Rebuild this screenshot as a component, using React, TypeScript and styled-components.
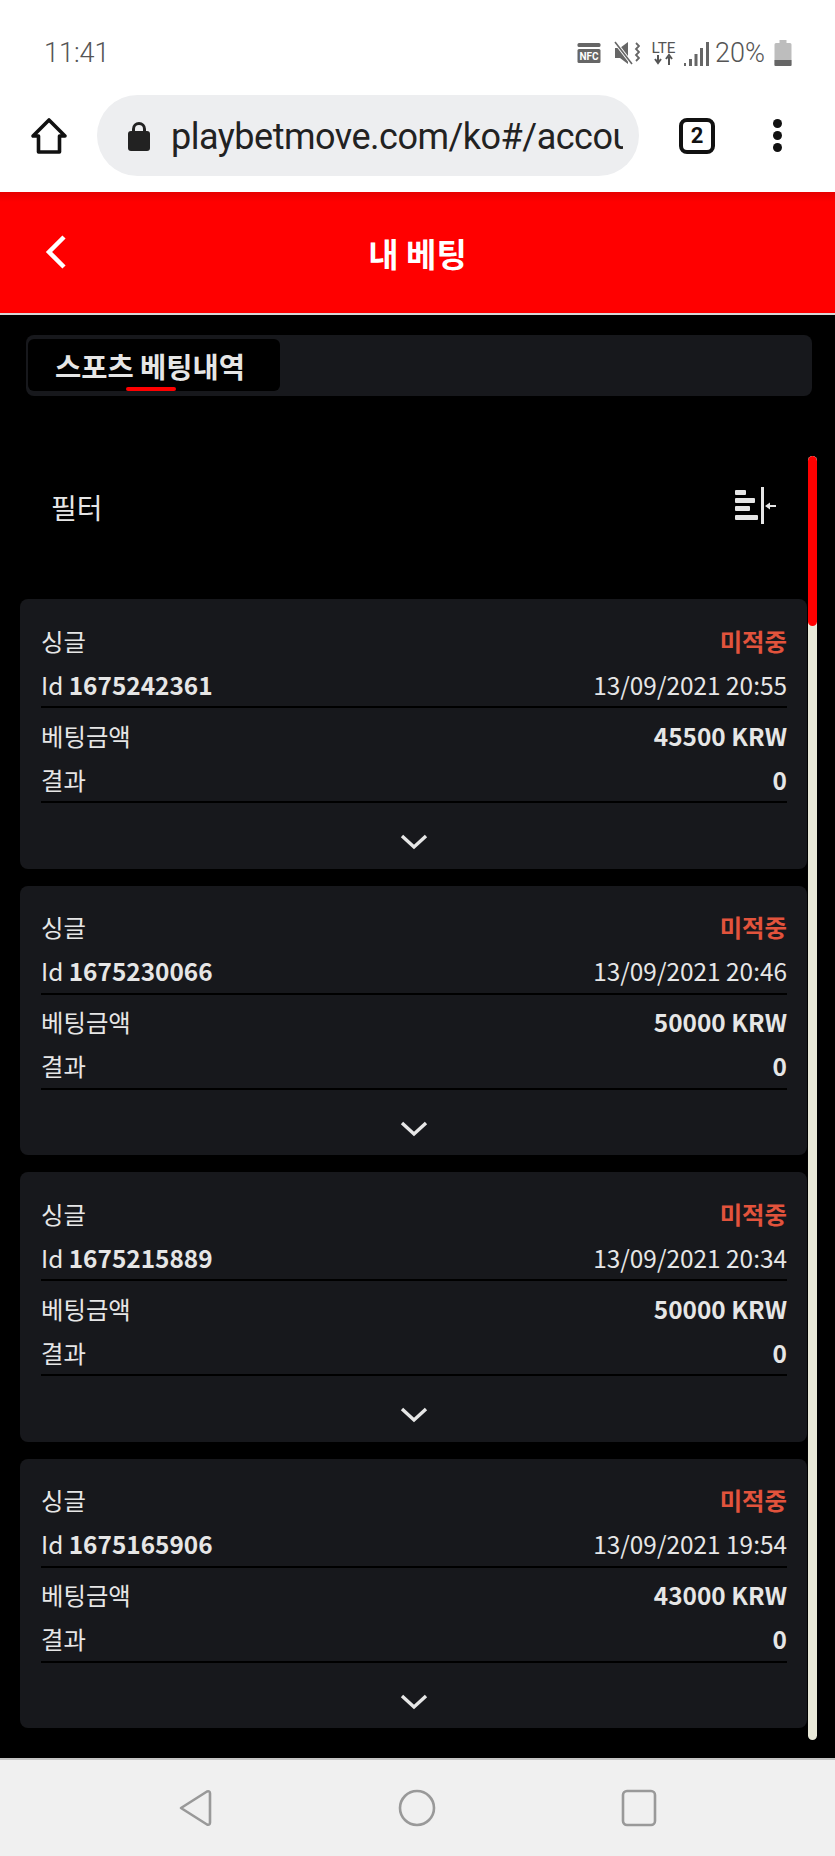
import React from 'react'
import styled, { createGlobalStyle } from 'styled-components'

const GlobalStyle = createGlobalStyle`
  html, body {
    margin: 0;
    padding: 0;
    background: #000;
  }
  * {
    box-sizing: border-box;
  }
`

const KR = `'Noto Sans CJK KR', 'Noto Sans', sans-serif`

const bets = [
  { id: '1675242361', date: '13/09/2021 20:55', amount: '45500 KRW' },
  { id: '1675230066', date: '13/09/2021 20:46', amount: '50000 KRW' },
  { id: '1675215889', date: '13/09/2021 20:34', amount: '50000 KRW' },
  { id: '1675165906', date: '13/09/2021 19:54', amount: '43000 KRW' },
]

const StatusIcons = () => (
  <StatusRight>
    <StatusIcon $gap={0} width="24" height="20" viewBox="0 0 24 20">
      <rect x="0.5" y="0" width="23" height="4" rx="1.5" fill="#666" />
      <rect x="0.5" y="6" width="23" height="14" rx="1.5" fill="#666" />
      <text x="12" y="17" textAnchor="middle" fontSize="10" fontWeight="700" fontFamily="Roboto, sans-serif" fill="#fff">NFC</text>
    </StatusIcon>
    <StatusIcon $gap={13} width="26" height="24" viewBox="0 0 26 24" fill="none">
      <path d="M1 7h5l8-6v22l-8-6H1z" fill="#666" />
      <path d="M1 1l17 22" stroke="#fff" strokeWidth="3.500" />
      <path d="M1 1l17 22" stroke="#666" strokeWidth="1.600" />
      <path d="M22 2l3 3-3 3 3 3-3 3 3 3-3 3" stroke="#666" strokeWidth="1.800" />
    </StatusIcon>
    <StatusIcon $gap={11} width="25" height="25" viewBox="0 0 25 25">
      <text x="0.5" y="12" textLength="24" lengthAdjust="spacingAndGlyphs" fontSize="15" fontFamily="Roboto, sans-serif" fill="#555">LTE</text>
      <path d="M7 14v7M4 18l3 4 3-4" stroke="#555" strokeWidth="2" fill="none" />
      <path d="M18 24v-8M15 18l3-4 3 4" stroke="#555" strokeWidth="2" fill="none" />
    </StatusIcon>
    <StatusIcon $gap={8} width="26" height="25" viewBox="0 0 26 25">
      <path d="M0 22h2v3H0zM5 18h3v7H5zM10.500 13h3v12h-3zM16 7h3v18h-3zM22 1h3v24h-3z" fill="#666" />
    </StatusIcon>
    <Percent>20%</Percent>
    <StatusIcon $gap={9} width="18" height="26" viewBox="0 0 18 26">
      <path d="M5.500 0h7v3h3.500a1.500 1.500 0 0 1 1.500 1.500V25a1 1 0 0 1-1 1H1.500a1 1 0 0 1-1-1V4.500A1.500 1.500 0 0 1 2 3h3.500z" fill="#bdbdbd" />
      <path d="M.5 20h17v5a1 1 0 0 1-1 1H1.500a1 1 0 0 1-1-1z" fill="#666" />
    </StatusIcon>
  </StatusRight>
)

const BetCard = ({ id, date, amount }: { id: string; date: string; amount: string }) => (
  <Card>
    <Group>
      <Row>
        <Label>싱글</Label>
        <Lost>미적중</Lost>
      </Row>
      <Row>
        <Label>Id <b>{id}</b></Label>
        <Label>{date}</Label>
      </Row>
    </Group>
    <Group>
      <Row>
        <Label>베팅금액</Label>
        <Value>{amount}</Value>
      </Row>
      <Row>
        <Label>결과</Label>
        <Value>0</Value>
      </Row>
    </Group>
    <Expand>
      <svg width="28" height="16" viewBox="0 0 28 16" fill="none">
        <path d="M2 2l12 11L26 2" stroke="#e6e6e6" strokeWidth="3.400" />
      </svg>
    </Expand>
  </Card>
)

const App = () => (
  <Page>
    <GlobalStyle />
    <StatusBar>
      <Time>11:41</Time>
      <StatusIcons />
    </StatusBar>
    <Toolbar>
      <svg width="38" height="38" viewBox="0 0 38 38" fill="none">
        <path d="M19 3L3 19h5.500v16h21V19H35z" stroke="#111" strokeWidth="3.600" strokeLinejoin="round" />
      </svg>
      <AddressPill>
        <svg width="24" height="30" viewBox="0 0 24 30">
          <path d="M6.500 11V8a5.500 5.500 0 0 1 11 0v3" stroke="#222" strokeWidth="3" fill="none" />
          <rect x="1" y="10" width="22" height="20" rx="3" fill="#222" />
        </svg>
        <Url>playbetmove.com/ko#/account</Url>
      </AddressPill>
      <TabCount>2</TabCount>
      <Dots>
        <i />
        <i />
        <i />
      </Dots>
    </Toolbar>
    <Header>
      <BackIcon width="24" height="36" viewBox="0 0 24 36" fill="none">
        <path d="M20 3L5 18l15 15" stroke="#fff" strokeWidth="4.500" />
      </BackIcon>
      <Title>내 베팅</Title>
    </Header>
    <Content>
      <TabBar>
        <ActiveTab>스포츠 베팅내역</ActiveTab>
      </TabBar>
      <FilterRow>
        <FilterLabel>필터</FilterLabel>
        <svg width="41" height="38" viewBox="0 0 41 38" fill="#e6e6e6">
          <rect x="0" y="3" width="11" height="5" rx="1" />
          <rect x="0" y="11" width="20" height="5" rx="1" />
          <rect x="0" y="19" width="15" height="5" rx="1" />
          <rect x="0" y="28" width="23" height="5" rx="1" />
          <rect x="26" y="0" width="3" height="37" />
          <path d="M30 19l5-3.500v2.500h6v2h-6v2.500z" />
        </svg>
      </FilterRow>
      <CardList>
        {bets.map(b => (
          <BetCard key={b.id} {...b} />
        ))}
      </CardList>
      <ScrollTrack>
        <ScrollThumb />
      </ScrollTrack>
    </Content>
    <NavBar>
      <svg width="33" height="38" viewBox="0 0 33 38" fill="none">
        <path d="M2 19L28 2.500q3-1 3 2v29q0 3-3 2z" stroke="#999" strokeWidth="2.600" strokeLinejoin="round" />
      </svg>
      <svg width="38" height="38" viewBox="0 0 38 38" fill="none">
        <circle cx="19" cy="19" r="17" stroke="#999" strokeWidth="2.600" />
      </svg>
      <svg width="36" height="38" viewBox="0 0 36 38" fill="none">
        <rect x="2" y="2" width="32" height="34" rx="4" stroke="#999" strokeWidth="2.600" />
      </svg>
    </NavBar>
  </Page>
)

const Page = styled.div`
  width: 835px;
  height: 1856px;
  display: flex;
  flex-direction: column;
  overflow: hidden;
  background: #000;
  font-family: ${KR};
`

const StatusBar = styled.div`
  height: 95px;
  flex: none;
  padding: 11px 43px 0 44px;
  display: flex;
  align-items: center;
  justify-content: space-between;
  background: #fff;
`

const Time = styled.span`
  font: 300 27px Roboto, sans-serif;
  color: #555;
`

const StatusRight = styled.div`
  display: flex;
  align-items: center;
`

const StatusIcon = styled.svg<{ $gap: number }>`
  margin-left: ${props => props.$gap}px;
`

const Percent = styled.span`
  margin-left: 5px;
  font: 300 27px Roboto, sans-serif;
  color: #555;
`

const Toolbar = styled.div`
  height: 97px;
  flex: none;
  padding: 0 0 16px 30px;
  display: flex;
  align-items: center;
  background: #fff;
`

const AddressPill = styled.div`
  width: 542px;
  height: 81px;
  margin-left: 29px;
  padding: 0 16px 0 30px;
  display: flex;
  align-items: center;
  gap: 20px;
  border-radius: 41px;
  background: #edeef0;
`

const Url = styled.div`
  flex: 1;
  padding-top: 3px;
  overflow: hidden;
  white-space: nowrap;
  font: 400 36px Roboto, sans-serif;
  letter-spacing: -0.5px;
  color: #222;
`

const TabCount = styled.div`
  width: 36px;
  height: 36px;
  margin-left: 40px;
  display: flex;
  align-items: center;
  justify-content: center;
  border: 4px solid #111;
  border-radius: 8px;
  font: 700 22px Roboto, sans-serif;
  color: #111;
`

const Dots = styled.div`
  margin-left: 58px;
  display: flex;
  flex-direction: column;
  gap: 3px;

  i {
    display: block;
    width: 9px;
    height: 9px;
    border-radius: 50%;
    background: #111;
  }
`

const Header = styled.div`
  height: 123px;
  flex: none;
  position: relative;
  display: flex;
  align-items: center;
  justify-content: center;
  background: linear-gradient(#e60000, #f00 10px);
  border-bottom: 2px solid #d8d8d8;
`

const BackIcon = styled.svg`
  position: absolute;
  left: 44px;
  top: 42px;
`

const Title = styled.h1`
  margin: 0;
  font-size: 33px;
  font-weight: 700;
  color: #fff;
`

const Content = styled.div`
  flex: 1;
  position: relative;
  padding-top: 20px;
`

const TabBar = styled.div`
  width: 786px;
  height: 61px;
  margin-left: 26px;
  padding: 4px 2px 5px;
  border-radius: 8px;
  background: #17181c;
`

const ActiveTab = styled.div`
  width: 252px;
  height: 52px;
  padding-right: 8px;
  position: relative;
  display: flex;
  align-items: center;
  justify-content: center;
  border-radius: 6px;
  background: #000;
  font-size: 28.5px;
  font-weight: 700;
  color: #e6e6e6;

  &::after {
    content: '';
    position: absolute;
    left: 98px;
    bottom: 0;
    width: 50px;
    height: 4px;
    border-radius: 2px;
    background: #f00;
  }
`

const FilterRow = styled.div`
  height: 203px;
  padding: 16px 29px 0 51px;
  margin-right: 30px;
  display: flex;
  align-items: center;
  justify-content: space-between;
`

const FilterLabel = styled.span`
  padding-top: 3px;
  font-size: 28px;
  color: #e6e6e6;
`

const CardList = styled.div`
  margin-left: 20px;
  width: 787px;
  display: flex;
  flex-direction: column;
  gap: 17px;
`

const Card = styled.section`
  height: 269.6px;
  padding: 19px 20px 0 21px;
  border-radius: 8px;
  background: #17181c;
`

const Group = styled.div`
  margin-bottom: 5px;
  border-bottom: 2px solid #000;
`

const Row = styled.div`
  height: 44px;
  display: flex;
  align-items: center;
  justify-content: space-between;
`

const Label = styled.span`
  font-size: 24.4px;
  color: #e6e6e6;

  b {
    font-weight: 700;
  }
`

const Lost = styled.span`
  font-size: 24.4px;
  font-weight: 700;
  color: #e2533c;
`

const Value = styled.span`
  font-size: 24.4px;
  font-weight: 700;
  color: #e6e6e6;
`

const Expand = styled.div`
  padding-top: 26px;
  display: flex;
  justify-content: center;
`

const ScrollTrack = styled.div`
  position: absolute;
  right: 18px;
  top: 141px;
  width: 9px;
  height: 1284px;
  border-radius: 5px;
  overflow: hidden;
  background: #e8e8d8;
`

const ScrollThumb = styled.div`
  height: 170px;
  border-radius: 5px;
  background: #f00;
`

const NavBar = styled.div`
  height: 98px;
  flex: none;
  padding: 0 178px 0 179px;
  display: flex;
  align-items: center;
  justify-content: space-between;
  background: #f0f0f0;
  border-top: 2px solid #c4c4c4;
`

export default App
